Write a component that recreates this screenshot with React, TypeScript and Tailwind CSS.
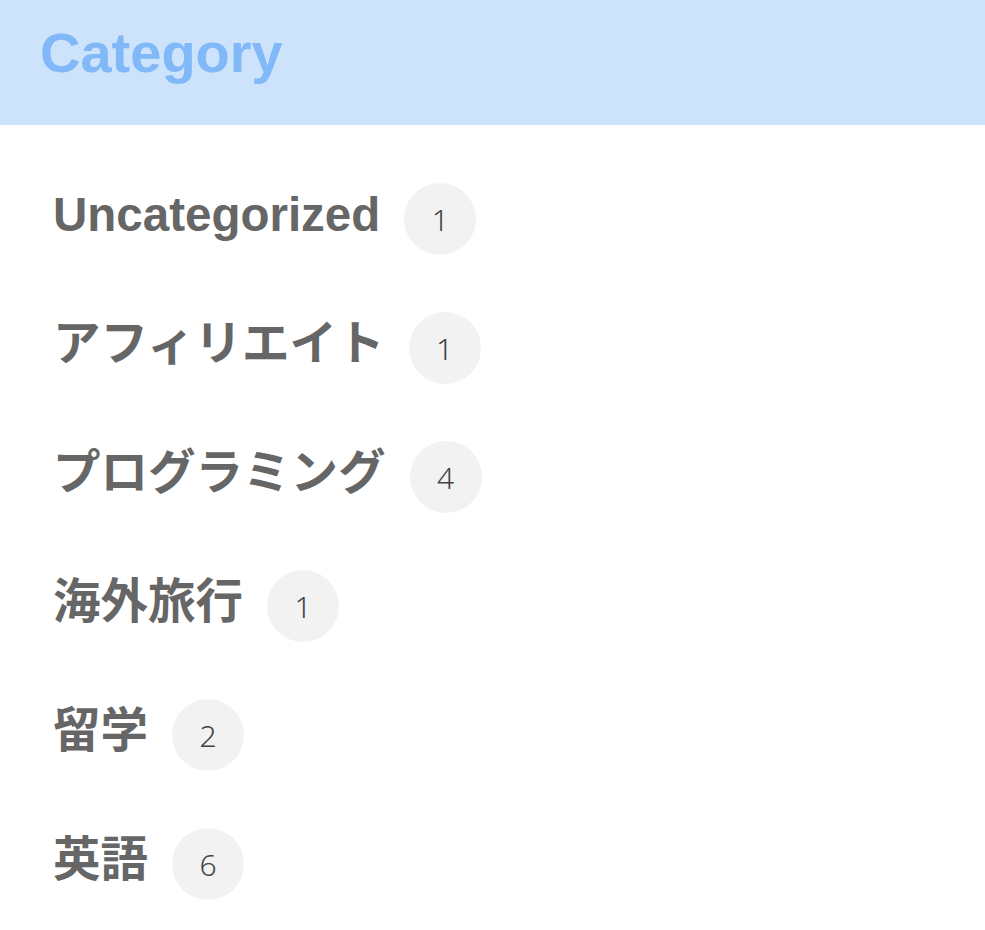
/**
 * Category widget
 *
 * Sidebar list of post categories with post counts
 */

type CategoryItem = {
  name: string;
  count: number;
};

const categories: CategoryItem[] = [
  { name: 'Uncategorized', count: 1 },
  { name: 'アフィリエイト', count: 1 },
  { name: 'プログラミング', count: 4 },
  { name: '海外旅行', count: 1 },
  { name: '留学', count: 2 },
  { name: '英語', count: 6 },
];

export default function App() {
  return (
    <div className="w-[985px] min-h-[930px] bg-white font-['Liberation_Sans','Noto_Sans_CJK_JP',sans-serif]">
      {/* Header */}
      <div className="h-[125px] bg-[#cce3fb] px-[40px] pt-[25px]">
        <h2 className="text-[56px] leading-none font-bold text-[#80b8f8]">
          Category
        </h2>
      </div>

      {/* Category list */}
      <ul className="flex flex-col gap-[57px] pl-[53px] pt-[58px]">
        {categories.map(category => (
          <li key={category.name} className="flex items-center">
            <span className="mb-[9px] text-[47.5px] leading-none font-bold text-[#666666]">
              {category.name}
            </span>
            <span className="ml-[24px] flex h-[72px] w-[72px] items-center justify-center rounded-full bg-[#f2f2f2] font-['Noto_Sans',sans-serif] text-[30px] font-light text-[#444444]">
              {category.count}
            </span>
          </li>
        ))}
      </ul>
    </div>
  );
}
